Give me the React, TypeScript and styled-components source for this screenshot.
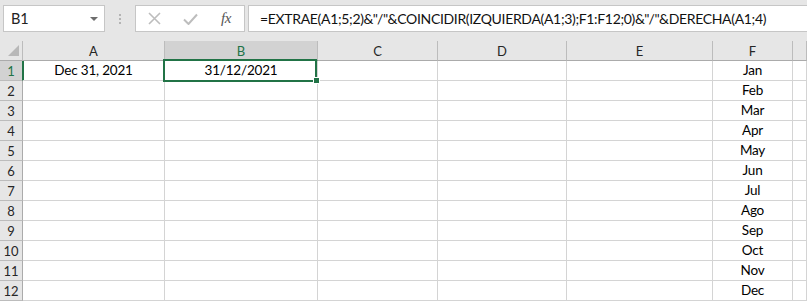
import React from 'react';
import styled, { createGlobalStyle } from 'styled-components';

const GREEN = '#217346';

const Global = createGlobalStyle`
  html, body { margin: 0; padding: 0; background: #fff; overflow: hidden; }
  body { font-family: Lato, "Liberation Sans", sans-serif; }
`;

const Window = styled.div`
  width: 807px;
  height: 301px;
  overflow: hidden;
  background: #fff;
`;

const Toolbar = styled.div`
  height: 41px;
  box-sizing: border-box;
  background: #e6e6e6;
  display: flex;
  align-items: flex-start;
  padding: 5px 0 0 3px;
`;

const NameBox = styled.div`
  width: 102px;
  height: 27px;
  box-sizing: border-box;
  background: #fff;
  border: 1px solid #c6c6c6;
  display: flex;
  align-items: center;
  justify-content: space-between;
  padding: 0 6px 0 7px;
  font-size: 14.5px;
  color: #222;
`;

const Caret = styled.span`
  width: 0;
  height: 0;
  border-left: 4px solid transparent;
  border-right: 4px solid transparent;
  border-top: 4px solid #6d6d6d;
`;

const Grip = styled.div`
  width: 3px;
  height: 27px;
  margin: 0 13px 0 14px;
  display: flex;
  flex-direction: column;
  justify-content: center;
  gap: 2px;
  span {
    display: block;
    width: 2px;
    height: 2px;
    background: #b4b4b4;
  }
`;

const ButtonBox = styled.div`
  width: 110px;
  height: 27px;
  box-sizing: border-box;
  background: #fff;
  border: 1px solid #c6c6c6;
  display: grid;
  grid-template-columns: repeat(3, 36px);
  align-items: center;
  justify-items: center;
`;

const Fx = styled.span`
  font-family: "Liberation Serif", "DejaVu Serif", serif;
  font-style: italic;
  font-size: 15px;
  color: #555;
  letter-spacing: -0.5px;
`;

const FormulaInput = styled.div`
  flex: 1;
  height: 27px;
  margin: 0 -2px 0 3px;
  box-sizing: border-box;
  background: #fff;
  border: 1px solid #c6c6c6;
  display: flex;
  align-items: center;
  padding: 0 0 0 11px;
  font-size: 14px;
  color: #111;
  white-space: nowrap;
  overflow: hidden;
  letter-spacing: -0.33px;
`;

const Sheet = styled.div`
  display: grid;
  grid-template-columns: 23px 142px 153px 120px 129px 146px 80px 1fr;
  grid-auto-rows: 20px;
  background: #fff;
`;

const Corner = styled.div`
  box-sizing: border-box;
  background: #e6e6e6;
  border-right: 1px solid #bcbcbc;
  border-bottom: 1px solid #ababab;
  display: flex;
  align-items: flex-end;
  justify-content: flex-end;
  padding: 0 3px 4px 0;
`;

const CornerTriangle = styled.span`
  width: 0;
  height: 0;
  border-left: 11px solid transparent;
  border-bottom: 11px solid #b8b8b8;
`;

const ColHeader = styled.div<{ $active?: boolean }>`
  box-sizing: border-box;
  background: ${p => (p.$active ? '#d2d2d2' : '#e6e6e6')};
  color: ${p => (p.$active ? GREEN : '#262626')};
  border-right: 1px solid #bcbcbc;
  border-bottom: 1px solid ${p => (p.$active ? GREEN : '#ababab')};
  font-size: 13px;
  display: flex;
  align-items: center;
  justify-content: center;
  padding-top: 1px;
`;

const RowHeader = styled.div<{ $active?: boolean }>`
  box-sizing: border-box;
  background: ${p => (p.$active ? '#d2d2d2' : '#e6e6e6')};
  color: ${p => (p.$active ? GREEN : '#262626')};
  border-right: 1px solid ${p => (p.$active ? GREEN : '#ababab')};
  border-bottom: 1px solid #bcbcbc;
  box-shadow: ${p => (p.$active ? `1px 0 0 ${GREEN}` : 'none')};
  font-size: 13px;
  display: flex;
  align-items: center;
  justify-content: center;
  padding-top: 1px;
`;

const Cell = styled.div`
  position: relative;
  box-sizing: border-box;
  border-right: 1px solid #d4d4d4;
  border-bottom: 1px solid #d4d4d4;
  font-size: 13.5px;
  color: #000;
  display: flex;
  align-items: flex-end;
  justify-content: center;
  padding-bottom: 2px;
  letter-spacing: -0.2px;
  white-space: nowrap;
`;

const Selection = styled.div`
  position: absolute;
  left: -2px;
  top: -2px;
  width: 154px;
  height: 23px;
  box-sizing: border-box;
  border: 2px solid ${GREEN};
  pointer-events: none;
  z-index: 2;
`;

const FillHandle = styled.div`
  position: absolute;
  left: 149px;
  top: 17px;
  width: 5px;
  height: 5px;
  background: ${GREEN};
  box-shadow: 0 0 0 1px #fff;
  z-index: 3;
`;

const columns = ['A', 'B', 'C', 'D', 'E', 'F', ''];
const months = ['Jan', 'Feb', 'Mar', 'Apr', 'May', 'Jun', 'Jul', 'Ago', 'Sep', 'Oct', 'Nov', 'Dec'];

const CrossIcon = () => (
  <svg width="13" height="13" viewBox="0 0 13 13">
    <path d="M1 1 L12 12 M12 1 L1 12" stroke="#bdbdbd" strokeWidth="1.6" fill="none" />
  </svg>
);

const CheckIcon = () => (
  <svg width="15" height="12" viewBox="0 0 15 12">
    <path d="M1 6.5 L5.5 11 L14 1.5" stroke="#bdbdbd" strokeWidth="2" fill="none" />
  </svg>
);

const formula = '=EXTRAE(A1;5;2)&"/"&COINCIDIR(IZQUIERDA(A1;3);F1:F12;0)&"/"&DERECHA(A1;4)';

export default function App() {
  return (
    <Window>
      <Global />
      <Toolbar>
        <NameBox>
          <span>B1</span>
          <Caret />
        </NameBox>
        <Grip>
          <span />
          <span />
          <span />
        </Grip>
        <ButtonBox>
          <CrossIcon />
          <CheckIcon />
          <Fx>fx</Fx>
        </ButtonBox>
        <FormulaInput>{formula}</FormulaInput>
      </Toolbar>
      <Sheet>
        <Corner>
          <CornerTriangle />
        </Corner>
        {columns.map((c, i) => (
          <ColHeader key={i} $active={c === 'B'}>
            {c}
          </ColHeader>
        ))}
        {months.map((m, r) => (
          <React.Fragment key={m}>
            <RowHeader $active={r === 0}>{r + 1}</RowHeader>
            <Cell>{r === 0 ? 'Dec 31, 2021' : ''}</Cell>
            <Cell>
              {r === 0 ? '31/12/2021' : ''}
              {r === 0 && (
                <>
                  <Selection />
                  <FillHandle />
                </>
              )}
            </Cell>
            <Cell />
            <Cell />
            <Cell />
            <Cell>{m}</Cell>
            <Cell />
          </React.Fragment>
        ))}
      </Sheet>
    </Window>
  );
}
